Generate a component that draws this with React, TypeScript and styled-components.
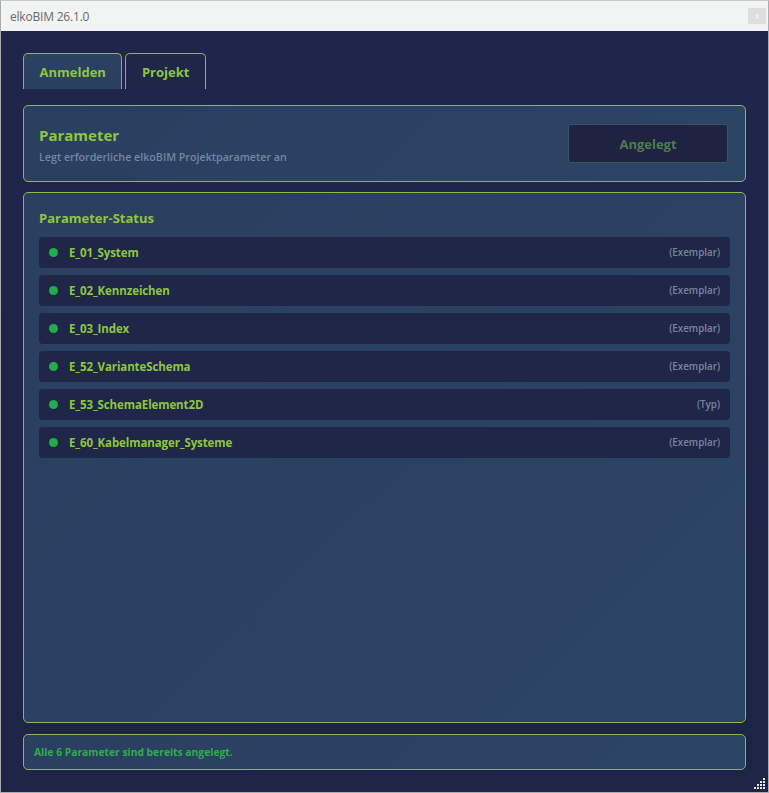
import React from "react";
import styled, { createGlobalStyle } from "styled-components";

const Global = createGlobalStyle`
  html, body { margin: 0; padding: 0; background: #f3f3f3; }
  body { font-family: "Open Sans", "Noto Sans", sans-serif; }
  * { box-sizing: border-box; }
`;

const Window = styled.div`
  width: 769px;
  height: 793px;
  display: flex;
  flex-direction: column;
  border: 1px solid #a9abb0;
  border-top-color: #c8c8c8;
  background: #1f2547;
  position: relative;
  overflow: hidden;
`;

const TitleBar = styled.div`
  height: 30px;
  flex: none;
  background: #f2f3f3;
  display: flex;
  align-items: center;
  justify-content: space-between;
  padding: 0 2px 0 9px;
`;

const TitleText = styled.span`
  font-family: "Open Sans", sans-serif;
  font-size: 12px;
  color: #6a6a6a;
  letter-spacing: -0.2px;
`;

const CloseBtn = styled.div`
  width: 18px;
  height: 16px;
  background: #dedede;
  display: flex;
  align-items: center;
  justify-content: center;
  color: #f7f7f7;
  font-size: 8px;
  font-family: "DejaVu Sans", sans-serif;
`;

const Body = styled.div`
  flex: 1;
  display: flex;
  flex-direction: column;
  padding: 22px 22px 22px 22px;
  background: linear-gradient(180deg, #20264a 0%, #1e2446 100%);
`;

const Tabs = styled.div`
  display: flex;
  gap: 3px;
  height: 36px;
  margin-bottom: 16px;
`;

const Tab = styled.div<{ $active?: boolean }>`
  height: 36px;
  padding: 0 15.5px;
  display: flex;
  align-items: center;
  border: 1px solid #8fb844;
  border-bottom: none;
  border-radius: 5px 5px 0 0;
  background: ${(p) => (p.$active ? "#1f2648" : "linear-gradient(180deg, #2c4263, #2a3e5f)")};
  color: #8dc63f;
  font-weight: 700;
  font-size: 13px;
`;

const Panel = styled.div`
  border: 1px solid #8fb844;
  border-radius: 5px;
  background: linear-gradient(135deg, #2b3f60 0%, #2c4466 100%);
`;

const ParamPanel = styled(Panel)`
  height: 77px;
  display: flex;
  align-items: center;
  justify-content: space-between;
  padding: 0 17px 0 15px;
  margin-bottom: 10px;
`;

const TextBlock = styled.div`
  margin-top: 2px;
`;

const ParamTitle = styled.div`
  color: #8dc63f;
  font-weight: 700;
  font-size: 15px;
  line-height: 20px;
`;

const ParamSub = styled.div`
  color: #7487a3;
  font-weight: 600;
  font-size: 10.7px;
  margin-top: 5px;
`;

const StateButton = styled.div`
  width: 160px;
  height: 39px;
  background: #1d2340;
  border: 1px solid #3d5361;
  border-radius: 3px;
  display: flex;
  align-items: center;
  justify-content: center;
  color: #4f7b4f;
  font-weight: 700;
  font-size: 13px;
`;

const StatusPanel = styled(Panel)`
  flex: 1;
  padding: 15px 15px;
  display: flex;
  flex-direction: column;
  margin-bottom: 11px;
`;

const StatusTitle = styled.div`
  color: #8dc63f;
  font-weight: 700;
  font-size: 13px;
  line-height: 20px;
  margin-bottom: 9px;
`;

const List = styled.div`
  display: flex;
  flex-direction: column;
  gap: 7px;
`;

const Row = styled.div`
  height: 31px;
  background: #1f2648;
  border-radius: 4px;
  display: flex;
  align-items: center;
  padding: 0 10px 0 10px;
`;

const Dot = styled.span`
  width: 9px;
  height: 9px;
  border-radius: 50%;
  background: #22ad4a;
  margin-right: 11px;
  flex: none;
`;

const Name = styled.span`
  color: #8dc63f;
  font-weight: 700;
  font-size: 11.5px;
  flex: 1;
  letter-spacing: -0.1px;
`;

const Kind = styled.span`
  color: #76869f;
  font-weight: 600;
  font-size: 9.8px;
`;

const Footer = styled(Panel)`
  height: 36px;
  display: flex;
  align-items: center;
  padding: 0 10px;
`;

const FooterText = styled.span`
  color: #2cae4a;
  font-weight: 700;
  font-size: 10.3px;
`;

const Grip = styled.svg`
  position: absolute;
  right: 2px;
  bottom: 2px;
`;

const params: { name: string; kind: string }[] = [
  { name: "E_01_System", kind: "(Exemplar)" },
  { name: "E_02_Kennzeichen", kind: "(Exemplar)" },
  { name: "E_03_Index", kind: "(Exemplar)" },
  { name: "E_52_VarianteSchema", kind: "(Exemplar)" },
  { name: "E_53_SchemaElement2D", kind: "(Typ)" },
  { name: "E_60_Kabelmanager_Systeme", kind: "(Exemplar)" },
];

export default function App() {
  const dots: [number, number][] = [];
  for (let r = 0; r < 4; r++) {
    for (let c = 3 - r; c < 4; c++) dots.push([c * 3, r * 3]);
  }
  return (
    <>
      <Global />
      <Window>
        <TitleBar>
          <TitleText>elkoBIM 26.1.0</TitleText>
          <CloseBtn>x</CloseBtn>
        </TitleBar>
        <Body>
          <Tabs>
            <Tab>Anmelden</Tab>
            <Tab $active>Projekt</Tab>
          </Tabs>
          <ParamPanel>
            <TextBlock>
              <ParamTitle>Parameter</ParamTitle>
              <ParamSub>Legt erforderliche elkoBIM Projektparameter an</ParamSub>
            </TextBlock>
            <StateButton>Angelegt</StateButton>
          </ParamPanel>
          <StatusPanel>
            <StatusTitle>Parameter-Status</StatusTitle>
            <List>
              {params.map((p) => (
                <Row key={p.name}>
                  <Dot />
                  <Name>{p.name}</Name>
                  <Kind>{p.kind}</Kind>
                </Row>
              ))}
            </List>
          </StatusPanel>
          <Footer>
            <FooterText>Alle 6 Parameter sind bereits angelegt.</FooterText>
          </Footer>
        </Body>
        <Grip width="12" height="12" viewBox="0 0 12 12">
          {dots.map(([x, y], i) => (
            <rect key={i} x={x} y={y} width="2" height="2" fill="#e8e8ee" />
          ))}
        </Grip>
      </Window>
    </>
  );
}
